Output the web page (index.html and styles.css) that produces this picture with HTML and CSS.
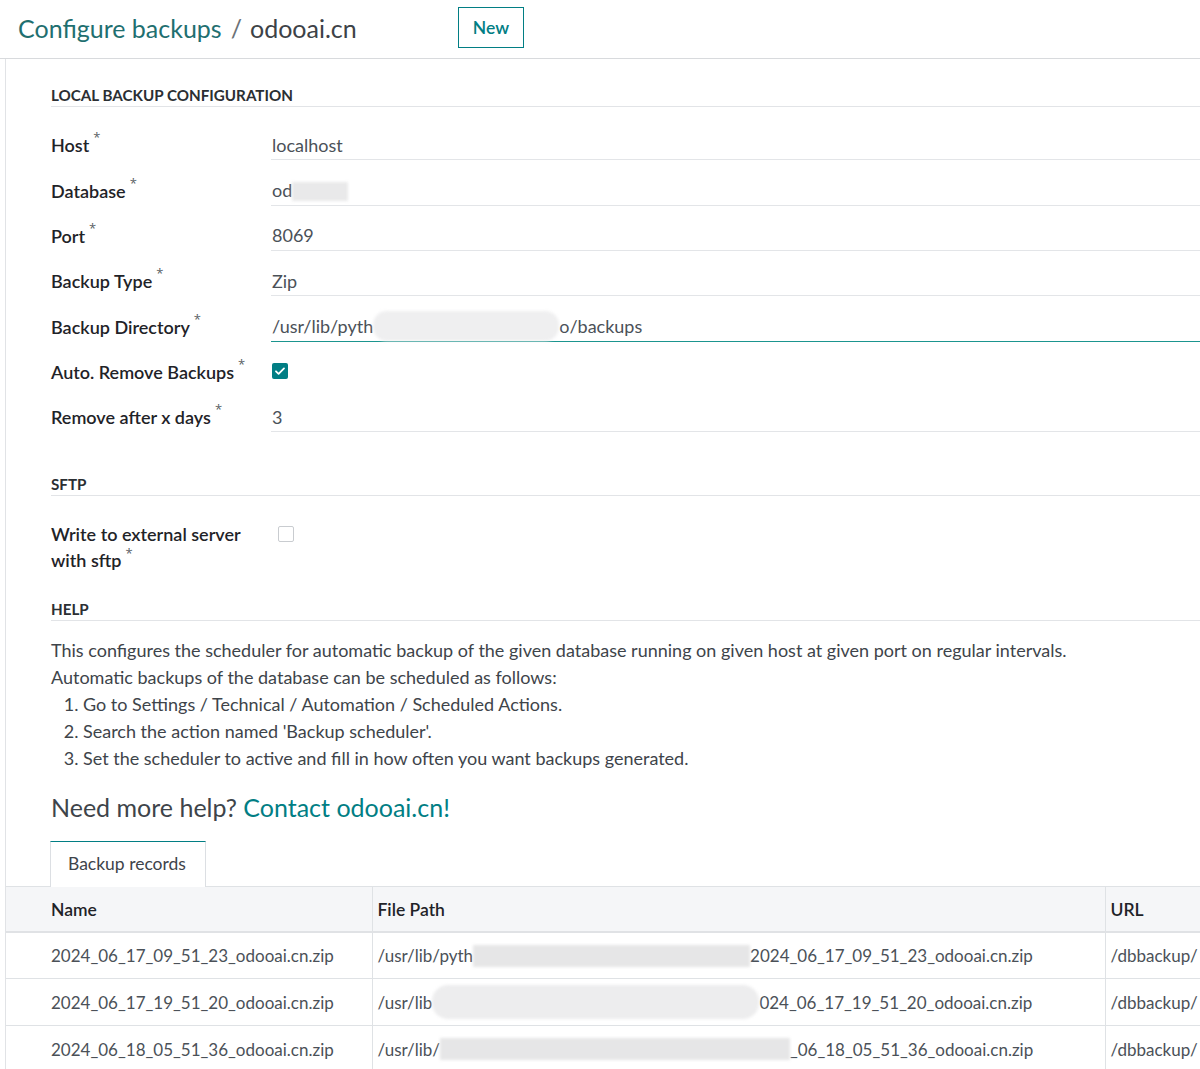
FILE: index.html
```html
<!DOCTYPE html>
<html lang="en">
<head>
<meta charset="utf-8">
<title>Configure backups / odooai.cn</title>
<link rel="stylesheet" href="styles.css">
</head>
<body>
<header class="cp">
  <div class="crumb"><span class="crumb-link">Configure backups</span><span class="crumb-sep">/</span><span class="crumb-cur">odooai.cn</span></div>
  <button class="btn-new" type="button">New</button>
</header>
<main class="sheet">
  <section class="group">
    <h2 class="sec-title">Local backup configuration</h2>
    <div class="fields">
      <div class="row"><div class="lbl">Host<span class="req">*</span></div><div class="val">localhost</div></div>
      <div class="row"><div class="lbl">Database<span class="req">*</span></div><div class="val">od<span class="blur blur-db"></span></div></div>
      <div class="row"><div class="lbl">Port<span class="req">*</span></div><div class="val">8069</div></div>
      <div class="row"><div class="lbl">Backup Type<span class="req">*</span></div><div class="val">Zip</div></div>
      <div class="row"><div class="lbl">Backup Directory<span class="req">*</span></div><div class="val val-focus">/usr/lib/pyth<span class="blur blur-dir"></span>o/backups</div></div>
      <div class="row"><div class="lbl">Auto. Remove Backups<span class="req">*</span></div><div class="val val-bare"><span class="cb cb-on"><svg viewBox="0 0 16 16" width="16" height="16"><path d="M4 8.3l2.6 2.5L12 5.4" fill="none" stroke="#fff" stroke-width="1.8" stroke-linecap="round" stroke-linejoin="round"/></svg></span></div></div>
      <div class="row"><div class="lbl">Remove after x days<span class="req">*</span></div><div class="val">3</div></div>
    </div>
  </section>

  <section class="group group-sftp">
    <h2 class="sec-title">SFTP</h2>
    <div class="row-wrap">
      <div class="lbl lbl-wrap">Write to external server<br>with sftp<span class="req">*</span></div>
      <span class="cb cb-off"></span>
    </div>
  </section>

  <section class="group group-help">
    <h2 class="sec-title">Help</h2>
    <div class="help">
      <p>This configures the scheduler for automatic backup of the given database running on given host at given port on regular intervals.</p>
      <p>Automatic backups of the database can be scheduled as follows:</p>
      <ol>
        <li>Go to Settings / Technical / Automation / Scheduled Actions.</li>
        <li>Search the action named 'Backup scheduler'.</li>
        <li>Set the scheduler to active and fill in how often you want backups generated.</li>
      </ol>
    </div>
    <p class="more">Need more help? <span class="more-link">Contact odooai.cn!</span></p>
  </section>

  <div class="tabs"><div class="tab">Backup records</div></div>
  <table class="grid">
    <colgroup><col class="c-name"><col class="c-path"><col class="c-url"></colgroup>
    <thead>
      <tr><th class="td-name">Name</th><th>File Path</th><th>URL</th></tr>
    </thead>
    <tbody>
      <tr><td class="td-name">2024_06_17_09_51_23_odooai.cn.zip</td><td><div class="path">/usr/lib/pyth<span class="blur blur-r1"></span>2024_06_17_09_51_23_odooai.cn.zip</div></td><td>/dbbackup/</td></tr>
      <tr><td class="td-name">2024_06_17_19_51_20_odooai.cn.zip</td><td><div class="path">/usr/lib<span class="blur blur-r2"></span>024_06_17_19_51_20_odooai.cn.zip</div></td><td>/dbbackup/</td></tr>
      <tr><td class="td-name">2024_06_18_05_51_36_odooai.cn.zip</td><td><div class="path">/usr/lib/<span class="blur blur-r3"></span>_06_18_05_51_36_odooai.cn.zip</div></td><td>/dbbackup/</td></tr>
    </tbody>
  </table>
</main>
</body>
</html>
```
FILE: styles.css
```css
* { box-sizing: border-box; }
html, body { margin: 0; padding: 0; }
body {
  width: 1200px;
  height: 1069px;
  overflow: hidden;
  background: #fff;
  font-family: Lato, "Open Sans", sans-serif;
  color: #374151;
  font-size: 18px;
}
.cp {
  height: 59px;
  border-bottom: 1px solid #d8dadd;
  display: flex;
  align-items: flex-start;
  padding-left: 18px;
}
.crumb {
  font-size: 25px;
  line-height: 30px;
  margin-top: 13px;
  width: 440px;
  white-space: nowrap;
}
.crumb-link { color: #1f6f70; }
.crumb-sep { color: #6b7177; margin: 0 8px 0 9px; }
.crumb-cur { color: #3d4247; }
.btn-new {
  margin-top: 7px;
  width: 66px;
  height: 41px;
  border: 1px solid #017e84;
  background: #fff;
  color: #017e84;
  font-family: inherit;
  font-size: 17.5px;
  font-weight: 600;
  padding: 0;
}
.sheet {
  margin-left: 5px;
  border-left: 1px solid #e1e3e6;
  height: 1010px;
  overflow: hidden;
  padding-top: 25px;
}
.group { padding-left: 45px; }
.sec-title {
  margin: 0;
  font-size: 15.2px;
  line-height: 22px;
  font-weight: 700;
  text-transform: uppercase;
  color: #2b2f33;
  border-bottom: 1px solid #e2e4e7;
}
.fields { padding-top: 8px; }
.row {
  display: flex;
  height: 45.33px;
  align-items: flex-end;
}
.lbl {
  width: 220px;
  flex: none;
  height: 30px;
  line-height: 30px;
  font-weight: 600;
  color: #1f2328;
  white-space: nowrap;
}
.req {
  display: inline-block;
  font-family: "Open Sans", sans-serif;
  font-size: 13px;
  color: #5a5f65;
  font-weight: 400;
  margin-left: 4px;
  line-height: 13px;
  vertical-align: top;
  position: relative;
  top: 1px;
}
.val {
  flex: 1;
  height: 30px;
  line-height: 30px;
  padding-left: 1px;
  border-bottom: 1px solid #e3e5e8;
  color: #4b5158;
  white-space: nowrap;
  display: flex;
  align-items: center;
}
.val.val-focus { border-bottom: 1px solid #1b958f; }
.val.val-bare { border-bottom-color: transparent; }
.blur {
  display: inline-block;
  background: #e9e9ea;
  filter: blur(1.5px);
  flex: none;
}
.blur-db { width: 56px; height: 19px; margin-top: 2px; }
.blur-dir { width: 186px; height: 30px; border-radius: 14px; background: #efeff0; }
.cb {
  display: inline-flex;
  width: 16px;
  height: 16px;
  border-radius: 2px;
  flex: none;
}
.cb-on { background: #017e84; border: 0; margin-left: 0; }
.cb-off { border: 1px solid #c9ccd0; background: #fff; margin-left: 5px; margin-top: 5px; }
.group-sftp { margin-top: 41px; }
.row-wrap {
  display: flex;
  align-items: flex-start;
  padding-top: 25px;
}
.lbl-wrap {
  width: 222px;
  height: auto;
  line-height: 26px;
  white-space: nowrap;
}
.lbl-wrap .req { top: 0; }
.group-help { margin-top: 25px; }
.help {
  padding-top: 16px;
  line-height: 27px;
  color: #3e444a;
}
.help p { margin: 0; }
.help ol { margin: 0; padding-left: 32px; }
.more {
  margin: 18px 0 0;
  font-size: 25px;
  line-height: 34px;
  color: #3e444a;
}
.more-link { color: #017e84; }
.tabs {
  padding-left: 44px;
  margin-top: 16px;
  display: flex;
}
.tab {
  width: 156px;
  height: 46px;
  border: 1px solid #dcdfe3;
  border-top: 1px solid #017e84;
  border-bottom: 0;
  padding-left: 17px;
  line-height: 44px;
  color: #3e444a;
  background: #fff;
  position: relative;
  top: 1px;
  font-size: 17.5px;
}
.grid {
  border-collapse: collapse;
  table-layout: fixed;
  width: 1300px;
  font-size: 17px;
}
.c-name { width: 366px; }
.c-path { width: 733px; }
.c-url { width: 201px; }
.grid th, .grid td {
  text-align: left;
  padding: 0 0 0 5px;
  white-space: nowrap;
  overflow: hidden;
  border: 1px solid #dfe2e5;
  border-left: 0;
}
.grid th {
  height: 45px;
  background: #f5f6f8;
  font-weight: 600;
  color: #1f2328;
  font-size: 17.5px;
  border-bottom: 2px solid #e0e2e5;
}
.grid td {
  height: 47px;
  color: #4b5158;
}
.grid .td-name { padding-left: 45px; }
.path { display: flex; align-items: center; }
.blur-r1 { width: 277px; height: 22px; background: #e6e6e7; }
.blur-r2 { width: 327px; height: 34px; border-radius: 16px; background: #ededee; }
.blur-r3 { width: 350px; height: 22px; background: #e6e6e7; }
```
